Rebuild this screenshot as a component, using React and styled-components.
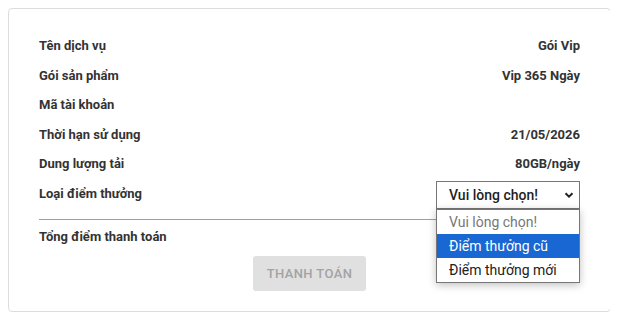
import styled, { createGlobalStyle } from "styled-components";

const Global = createGlobalStyle`
  body {
    margin: 8px;
    background: #fff;
    font-family: Roboto, "Liberation Sans", sans-serif;
    color: #333;
  }
`;

const Card = styled.div`
  border: 1px solid #dcdcdc;
  border-radius: 4px;
  margin-right: -1px;
  padding: 22px 30px 20px;
  background: #fff;
`;

const Row = styled.div`
  display: flex;
  align-items: center;
  justify-content: space-between;
  height: 29.5px;
  font-size: 13px;
  font-weight: 700;
  position: relative;
`;

const Label = styled.span``;

const Value = styled.span``;

const Divider = styled.div`
  height: 1px;
  background: #9e9e9e;
  margin-top: 11px;
  margin-bottom: 2px;
`;

const SelectWrap = styled.div`
  position: relative;
  margin-top: 3px;
  z-index: 2;
`;

const SelectBox = styled.div`
  width: 144px;
  height: 28px;
  box-sizing: border-box;
  border: 1px solid #767676;
  background: #fff;
  display: flex;
  align-items: center;
  justify-content: space-between;
  padding: 0 5px 0 12px;
  font-size: 14px;
  font-weight: 500;
  color: #1e1e1e;
`;

const Menu = styled.ul`
  position: absolute;
  top: 28px;
  left: 0;
  width: 144px;
  box-sizing: border-box;
  margin: 0;
  padding: 0;
  list-style: none;
  background: #fff;
  border: 1px solid #767676;
  box-shadow: 0 2px 8px rgba(0, 0, 0, 0.25);
`;

const Option = styled.li`
  height: 24px;
  line-height: 24px;
  padding-left: 12px;
  font-size: 14px;
  font-weight: 400;
  color: ${(p) => (p.$disabled ? "#777" : p.$active ? "#fff" : "#222")};
  background: ${(p) => (p.$active ? "#1967d2" : "transparent")};
`;

const Footer = styled.div`
  display: flex;
  justify-content: center;
  margin-top: 4px;
`;

const PayButton = styled.button`
  width: 113px;
  height: 35px;
  border: none;
  border-radius: 3px;
  background: #e0e0e0;
  color: #a3a3a3;
  font-family: Roboto, "Liberation Sans", sans-serif;
  font-size: 13px;
  font-weight: 500;
  letter-spacing: 0.4px;
  text-transform: uppercase;
`;

const Chevron = () => (
  <svg width="10" height="8" viewBox="0 0 10 8">
    <path d="M1.5 2.2 L5 5.6 L8.5 2.2" fill="none" stroke="#222" strokeWidth="2" />
  </svg>
);

const details = [
  ["Tên dịch vụ", "Gói Vip"],
  ["Gói sản phẩm", "Vip 365 Ngày"],
  ["Mã tài khoản", ""],
  ["Thời hạn sử dụng", "21/05/2026"],
  ["Dung lượng tải", "80GB/ngày"],
];

const options = ["Vui lòng chọn!", "Điểm thưởng cũ", "Điểm thưởng mới"];

export default function App() {
  return (
    <>
      <Global />
      <Card>
        {details.map(([k, v]) => (
          <Row key={k}>
            <Label>{k}</Label>
            <Value>{v}</Value>
          </Row>
        ))}
        <Row>
          <Label>Loại điểm thưởng</Label>
          <SelectWrap>
            <SelectBox>
              Vui lòng chọn!
              <Chevron />
            </SelectBox>
            <Menu>
              {options.map((o, i) => (
                <Option key={o} $disabled={i === 0} $active={i === 1}>
                  {o}
                </Option>
              ))}
            </Menu>
          </SelectWrap>
        </Row>
        <Divider />
        <Row>
          <Label>Tổng điểm thanh toán</Label>
        </Row>
        <Footer>
          <PayButton>Thanh toán</PayButton>
        </Footer>
      </Card>
    </>
  );
}
